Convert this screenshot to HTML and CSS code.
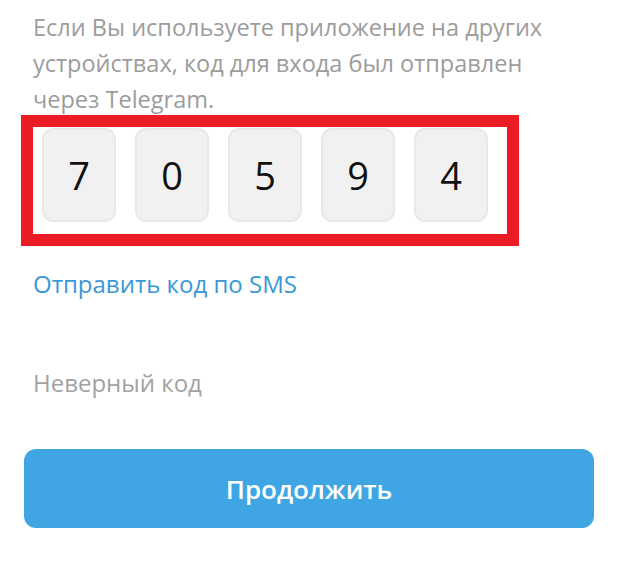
FILE: index.html
```html
<!DOCTYPE html>
<html lang="ru">
<head>
<meta charset="utf-8">
<title>Вход</title>
<link rel="stylesheet" href="styles.css">
</head>
<body>
<main class="page">
  <p class="hint">Если Вы используете приложение на других устройствах, код для входа был отправлен через Telegram.</p>
  <div class="code-frame">
    <div class="code-row">
      <div class="digit">7</div>
      <div class="digit">0</div>
      <div class="digit">5</div>
      <div class="digit">9</div>
      <div class="digit">4</div>
    </div>
  </div>
  <a class="sms-link" href="#">Отправить код по SMS</a>
  <div class="error">Неверный код</div>
  <button class="continue" type="button">Продолжить</button>
</main>
</body>
</html>
```

FILE: styles.css
```css
html, body {
  margin: 0;
  padding: 0;
  background: #ffffff;
}

.page {
  font-family: "Open Sans", "Noto Sans", sans-serif;
  padding: 9px 0 0 0;
  width: 624px;
  box-sizing: border-box;
}

.hint {
  margin: 0 0 0 33px;
  width: 532px;
  font-size: 23.5px;
  line-height: 36px;
  color: #9c9c9c;
}

.code-frame {
  margin: -2px 0 0 21px;
  width: 498px;
  height: 131px;
  box-sizing: border-box;
  border: 12px solid #ec1c24;
  padding: 1px 0 0 9px;
}

.code-row {
  display: flex;
  gap: 19px;
}

.digit {
  width: 74px;
  height: 94px;
  box-sizing: border-box;
  background: #f1f1f1;
  border: 2px solid #e8e8e8;
  border-radius: 11px;
  display: flex;
  align-items: center;
  justify-content: center;
  font-size: 38px;
  color: #111111;
}

.sms-link {
  display: block;
  margin: 22px 0 0 33px;
  font-size: 24px;
  line-height: 32px;
  color: #3a98d6;
  text-decoration: none;
}

.error {
  margin: 67px 0 0 33px;
  font-size: 24px;
  line-height: 32px;
  color: #a2a2a2;
}

.continue {
  display: block;
  margin: 50px 0 0 24px;
  width: 570px;
  height: 79px;
  border: none;
  border-radius: 12px;
  background: #40a6e3;
  color: #ffffff;
  font-family: "Open Sans", "Noto Sans", sans-serif;
  font-weight: 600;
  font-size: 26px;
  padding: 0;
}
```
